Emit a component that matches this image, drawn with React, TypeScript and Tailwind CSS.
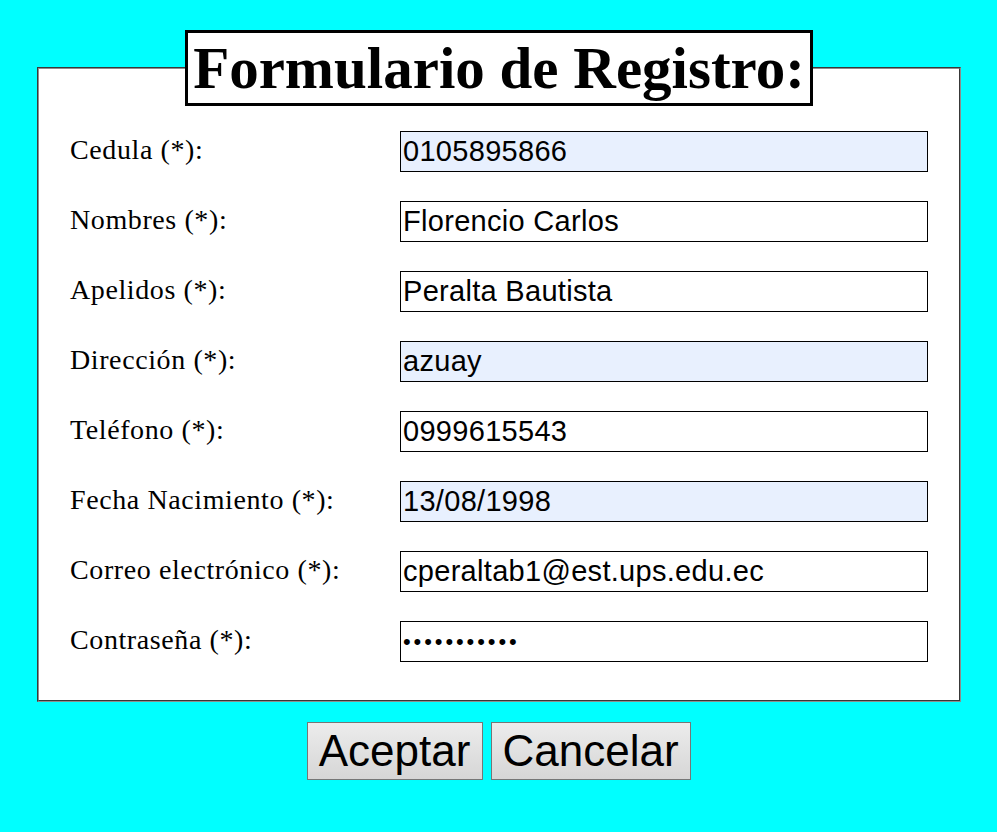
const campos = [
  { label: "Cedula (*):", value: "0105895866", auto: true },
  { label: "Nombres (*):", value: "Florencio Carlos" },
  { label: "Apelidos (*):", value: "Peralta Bautista" },
  { label: "Dirección (*):", value: "azuay", auto: true },
  { label: "Teléfono (*):", value: "0999615543" },
  { label: "Fecha Nacimiento (*):", value: "13/08/1998", auto: true },
  { label: "Correo electrónico (*):", value: "cperaltab1@est.ups.edu.ec" },
  { label: "Contraseña (*):", value: "ppppppppppp", password: true },
];

const App = () => {
  return (
    <div className="min-h-[832px] bg-[#00ffff] px-[37px] pt-[30px] font-['Liberation_Serif',serif] text-black">
      <form>
        <fieldset className="border-2 [border-style:groove] border-[#8c8c8c] bg-white px-[31px] pb-[38px]">
          <legend className="mx-auto border-[3px] border-black bg-white px-[5px] text-[59px] leading-[70px] font-bold">
            Formulario de Registro:
          </legend>
          <div className="grid grid-cols-[330px_528px] gap-y-[29px] pt-[25px]">
            {campos.map((c) => (
              <div key={c.label} className="contents">
                <label className="flex items-center text-[28px] tracking-[0.6px] -mt-[4px]">
                  {c.label}
                </label>
                <input
                  type={c.password ? "password" : "text"}
                  value={c.value}
                  readOnly
                  className={
                    "h-[41px] w-[528px] border border-black px-[2px] font-['Liberation_Sans',Arial,sans-serif] outline-none " +
                    (c.password ? "text-[22px] tracking-[2.9px] " : "text-[29px] tracking-[0.3px] ") +
                    (c.auto ? "bg-[#e8f0fe]" : "bg-white")
                  }
                />
              </div>
            ))}
          </div>
        </fieldset>
        <div className="flex justify-center gap-2 pt-[20px]">
          <button
            type="submit"
            className="h-[58px] w-[176px] border border-[#767676] bg-gradient-to-b from-[#ececec] to-[#d6d6d6] font-['Liberation_Sans',Arial,sans-serif] text-[44px] leading-none"
          >
            Aceptar
          </button>
          <button
            type="reset"
            className="h-[58px] w-[200px] border border-[#767676] bg-gradient-to-b from-[#ececec] to-[#d6d6d6] font-['Liberation_Sans',Arial,sans-serif] text-[44px] leading-none"
          >
            Cancelar
          </button>
        </div>
      </form>
    </div>
  );
};

export default App;
